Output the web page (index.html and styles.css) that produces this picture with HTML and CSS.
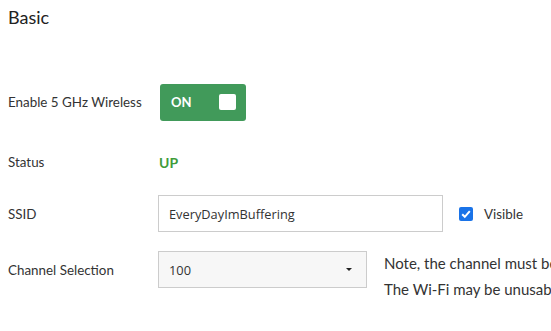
FILE: index.html
```html
<!DOCTYPE html>
<html>
<head>
<meta charset="utf-8">
<link rel="stylesheet" href="styles.css">
</head>
<body>
<div class="page">
  <h2 class="title">Basic</h2>
  <div class="form">
    <div class="row row-toggle">
      <div class="label">Enable 5 GHz Wireless</div>
      <div class="control">
        <div class="toggle"><span class="toggle-text">ON</span><span class="knob"></span></div>
      </div>
    </div>
    <div class="row row-status">
      <div class="label">Status</div>
      <div class="control"><span class="status-up">UP</span></div>
    </div>
    <div class="row row-ssid">
      <div class="label">SSID</div>
      <div class="control">
        <div class="input">EveryDayImBuffering</div>
        <label class="check">
          <span class="checkbox"><svg width="14" height="14" viewBox="0 0 14 14"><path d="M3.2 7.2 L5.8 9.8 L10.8 4.2" fill="none" stroke="#fff" stroke-width="2"/></svg></span>
          <span class="check-label">Visible</span>
        </label>
      </div>
    </div>
    <div class="row row-channel">
      <div class="label">Channel Selection</div>
      <div class="control">
        <div class="select"><span>100</span><span class="caret"></span></div>
        <div class="note">
          <div>Note, the channel must be set to a DFS channel only if supported.</div>
          <div>The Wi-Fi may be unusable for a minute while scanning.</div>
        </div>
      </div>
    </div>
  </div>
</div>
</body>
</html>
```
FILE: styles.css
```css
html, body {
  margin: 0;
  padding: 0;
  background: #fff;
  overflow: hidden;
}
body {
  font-family: "Lato", "Noto Sans", sans-serif;
  color: #333;
}
.page {
  padding: 0 0 0 8px;
  width: 700px;
}
.title {
  margin: 0;
  padding-top: 6px;
  font-size: 18px;
  font-weight: 400;
  line-height: 22px;
  color: #222;
}
.form {
  padding-top: 56px;
}
.row {
  display: flex;
  align-items: center;
}
.label {
  width: 150px;
  flex: none;
  font-size: 13.4px;
  color: #333;
}
.control {
  display: flex;
  align-items: center;
}
.row-toggle {
  height: 36px;
}
.toggle {
  width: 86px;
  height: 37px;
  margin-left: 2px;
  background: #419a5a;
  border-radius: 3px;
  box-sizing: border-box;
  display: flex;
  align-items: center;
  justify-content: space-between;
  padding: 0 10px 0 11px;
}
.toggle-text {
  color: #fff;
  font-weight: 700;
  font-size: 13px;
}
.knob {
  width: 17px;
  height: 16px;
  background: #fff;
  border-radius: 2px;
}
.row-status {
  margin-top: 32px;
  height: 20px;
}
.status-up {
  color: #3f9c3a;
  font-weight: 700;
  font-size: 14px;
  margin-left: 1px;
}
.row-ssid {
  margin-top: 23px;
  height: 37px;
}
.input {
  width: 285px;
  height: 37px;
  box-sizing: border-box;
  border: 1px solid #ccc;
  padding: 0 10px;
  display: flex;
  align-items: center;
  font-family: "Open Sans", sans-serif;
  font-size: 12.8px;
  color: #333;
}
.check {
  display: flex;
  align-items: center;
  margin-left: 16px;
}
.checkbox {
  width: 14px;
  height: 14px;
  background: #1a73e8;
  border-radius: 2px;
  display: inline-block;
}
.checkbox svg {
  display: block;
}
.check-label {
  margin-left: 11px;
  font-size: 13.4px;
  color: #333;
}
.row-channel {
  margin-top: 19px;
  align-items: flex-start;
}
.row-channel .label {
  margin-top: 11px;
}
.row-channel .control {
  align-items: flex-start;
}
.select {
  width: 209px;
  height: 37px;
  box-sizing: border-box;
  border: 1px solid #ccc;
  background: #f7f7f7;
  padding: 0 14px 0 10px;
  display: flex;
  align-items: center;
  justify-content: space-between;
  font-family: "Open Sans", sans-serif;
  font-size: 12.8px;
  color: #333;
}
.caret {
  width: 0;
  height: 0;
  border-left: 3px solid transparent;
  border-right: 3px solid transparent;
  border-top: 3px solid #222;
}
.note {
  margin-left: 17px;
  margin-top: -1px;
  font-size: 15px;
  line-height: 26px;
  white-space: nowrap;
  color: #333;
}
```
